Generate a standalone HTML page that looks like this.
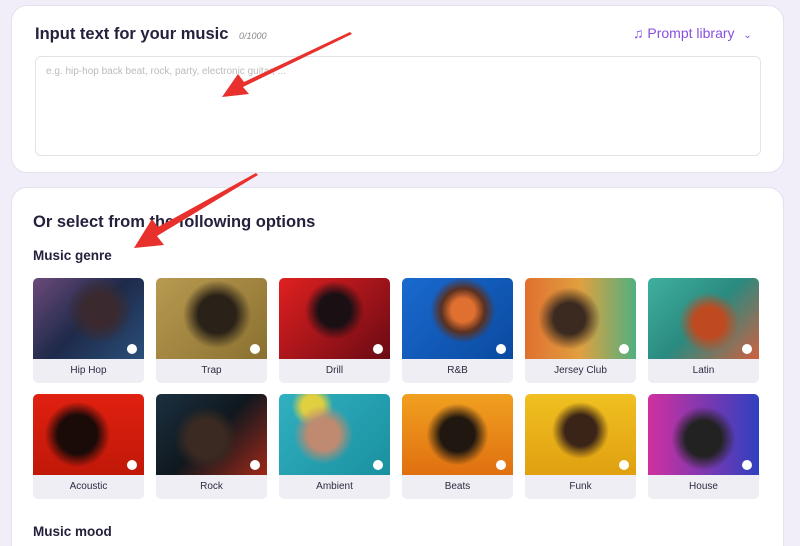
<!DOCTYPE html><html style="height:546px;overflow:hidden"><head><style>
body{margin:0;width:800px;height:546px;overflow:hidden;background:#f1eefa;font-family:"Liberation Sans",sans-serif;position:relative}
.card{position:absolute;left:11px;width:771px;background:#fff;border:1px solid #e4e1ee;border-radius:16px}
h2{position:absolute;margin:0;font-size:16.5px;font-weight:bold;color:#24213d}
h3{position:absolute;margin:0;font-size:13.5px;font-weight:bold;color:#24213d}
.tile{position:absolute;width:111px;height:105px;border-radius:5px;background:#efeef4;overflow:hidden}
.img{height:81px;position:relative}
.img:after{content:"";position:absolute;right:7px;bottom:5px;width:10px;height:10px;border-radius:50%;background:#fff}
.lab{text-align:center;font-size:10px;color:#2d2b40;line-height:24px}
</style></head><body>
<div class="card" style="top:5px;height:166px"></div>
<h2 style="left:35px;top:25px">Input text for your music <span style="font-size:9px;font-weight:normal;font-style:italic;color:#888;margin-left:6px">0/1000</span></h2>
<div style="position:absolute;left:633px;top:25px;font-size:14px;color:#8a4fe0">♫ Prompt library <span style="font-size:10px;margin-left:5px">⌄</span></div>
<div style="position:absolute;left:35px;top:56px;width:724px;height:98px;border:1px solid #e2e2e8;border-radius:6px"></div>
<div style="position:absolute;left:46px;top:66px;font-size:10px;color:#bbb">e.g. hip-hop back beat, rock, party, electronic guitar, ...</div>
<div class="card" style="top:187px;height:380px"></div>
<h2 style="left:33px;top:213px">Or select from the following options</h2>
<h3 style="left:33px;top:248px">Music genre</h3>
<div class="tile" style="left:33px;top:278px"><div class="img" style="background:radial-gradient(circle at 60% 40%,#3a2a30 20%,transparent 40%),linear-gradient(135deg,#6b4a7a,#1e2a4a 50%,#2a4f7a)"></div><div class="lab">Hip Hop</div></div>
<div class="tile" style="left:156px;top:278px"><div class="img" style="background:radial-gradient(circle at 55% 45%,#2a2218 25%,transparent 45%),linear-gradient(135deg,#b89a50,#8a7030)"></div><div class="lab">Trap</div></div>
<div class="tile" style="left:279px;top:278px"><div class="img" style="background:radial-gradient(circle at 50% 40%,#1a1014 22%,transparent 40%),linear-gradient(135deg,#e02020,#6a0a14)"></div><div class="lab">Drill</div></div>
<div class="tile" style="left:402px;top:278px"><div class="img" style="background:radial-gradient(circle at 55% 40%,#e07030 15%,#5a3020 28%,transparent 42%),linear-gradient(135deg,#1a6ad0,#0a4aa0)"></div><div class="lab">R&amp;B</div></div>
<div class="tile" style="left:525px;top:278px"><div class="img" style="background:radial-gradient(circle at 40% 50%,#3a2a20 20%,transparent 40%),linear-gradient(90deg,#e07030,#e0a040 50%,#50b080)"></div><div class="lab">Jersey Club</div></div>
<div class="tile" style="left:648px;top:278px"><div class="img" style="background:radial-gradient(circle at 55% 55%,#c04a20 20%,transparent 40%),linear-gradient(135deg,#40b0a0,#2a8a80 50%,#d06040)"></div><div class="lab">Latin</div></div>
<div class="tile" style="left:33px;top:394px"><div class="img" style="background:radial-gradient(circle at 40% 50%,#1a0a08 25%,transparent 42%),linear-gradient(180deg,#e02010,#c01808)"></div><div class="lab">Acoustic</div></div>
<div class="tile" style="left:156px;top:394px"><div class="img" style="background:radial-gradient(circle at 45% 55%,#3a2a22 25%,transparent 42%),linear-gradient(135deg,#1a3040,#10181e 50%,#a02818)"></div><div class="lab">Rock</div></div>
<div class="tile" style="left:279px;top:394px"><div class="img" style="background:radial-gradient(circle at 40% 50%,#c08a70 20%,transparent 38%),radial-gradient(circle at 30% 15%,#e0d040 10%,transparent 20%),linear-gradient(135deg,#30b0c0,#1a90a0)"></div><div class="lab">Ambient</div></div>
<div class="tile" style="left:402px;top:394px"><div class="img" style="background:radial-gradient(circle at 50% 50%,#201810 25%,transparent 45%),linear-gradient(180deg,#f0a020,#e07010)"></div><div class="lab">Beats</div></div>
<div class="tile" style="left:525px;top:394px"><div class="img" style="background:radial-gradient(circle at 50% 45%,#3a2418 22%,transparent 40%),linear-gradient(180deg,#f0c020,#e0a010)"></div><div class="lab">Funk</div></div>
<div class="tile" style="left:648px;top:394px"><div class="img" style="background:radial-gradient(circle at 50% 55%,#222 25%,transparent 45%),linear-gradient(90deg,#d030a0,#3040c0)"></div><div class="lab">House</div></div>
<h3 style="left:33px;top:524px">Music mood</h3>
<svg style="position:absolute;left:0;top:0" width="800" height="546"><polygon points="350,32 244,82 238,74 222,97 249,94 243,87 352,34" fill="#e8302c"/><polygon points="256,173 158,227 152,219 134,248 164,245 157,236 258,175" fill="#e8302c"/></svg>
</body></html>
